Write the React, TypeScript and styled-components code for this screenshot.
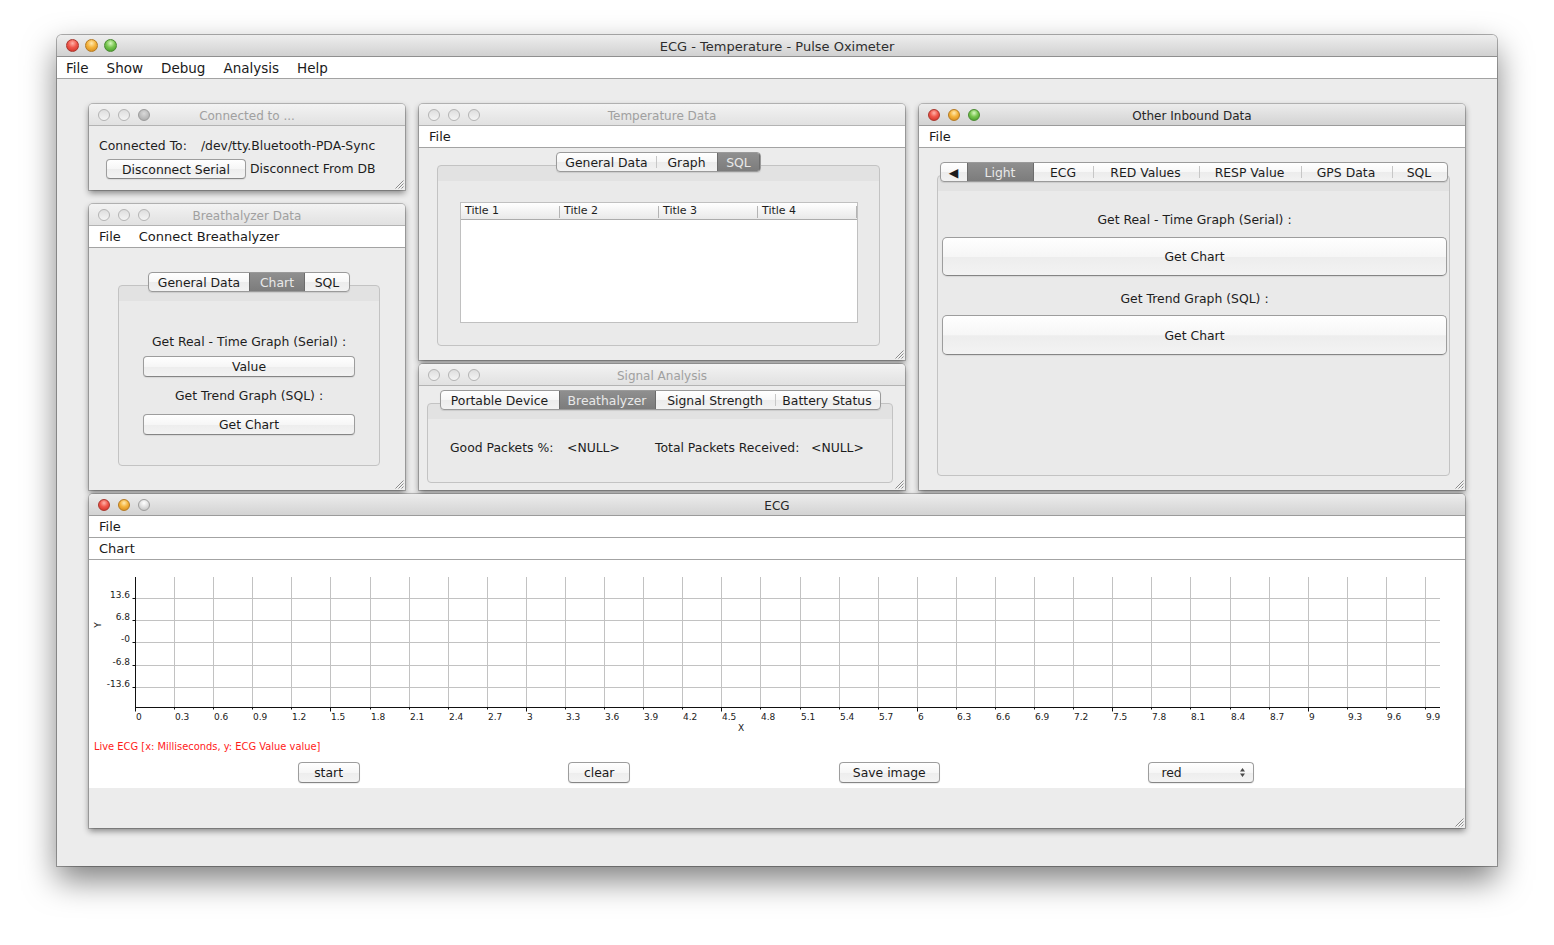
import React from "react";
import styled, { createGlobalStyle, css } from "styled-components";

const FONT = `"DejaVu Sans", "Lucida Grande", Verdana, sans-serif`;
const BODY_SIZE = 12.4;

const GlobalStyle = createGlobalStyle`
  html, body { margin: 0; padding: 0; background: #ffffff; }
  body { font-family: ${FONT}; color: #1d1d1d; }
  *, *::before, *::after { box-sizing: border-box; }
`;

const Page = styled.div`
  width: 1554px;
  height: 945px;
  padding: 35px 0 0 57px;
  overflow: hidden;
  background: #fff;
`;

const MainWindow = styled.div`
  width: 1440px;
  height: 831px;
  display: flex;
  flex-direction: column;
  background: #ececec;
  border-radius: 5px 5px 0 0;
  box-shadow: 0 0 0 1px rgba(0, 0, 0, 0.3), 0 14px 32px rgba(0, 0, 0, 0.5);
`;

const MainTitleBar = styled.div`
  flex: none;
  height: 22px;
  display: grid;
  grid-template-columns: 1fr auto 1fr;
  align-items: center;
  background: linear-gradient(#eeeeee, #d1d1d1);
  border-bottom: 1px solid #8f8f8f;
  border-radius: 5px 5px 0 0;
  font-size: 13px;
  color: #2e2e2e;
`;

const MenuBar = styled.div<{ $size?: number; $pad?: number }>`
  flex: none;
  height: 22px;
  display: flex;
  align-items: center;
  background: #ffffff;
  border-bottom: 1px solid #a3a3a3;
  font-size: ${(p) => p.$size ?? 13}px;
  color: #1a1a1a;
  padding-left: ${(p) => p.$pad ?? 0}px;
`;

const MenuItem = styled.span`
  padding: 1px 9px 0;
  line-height: 20px;
`;

const Desktop = styled.div`
  flex: 1;
  position: relative;
  background: #ececec;
`;

type LightKind = "red" | "orange" | "green" | "gray" | "hollow" | "hollowDark";

const lightBg: Record<LightKind, string> = {
  red: "radial-gradient(circle at 50% 30%, #ffb3a8 0%, #f0584c 45%, #c92b21 100%)",
  orange: "radial-gradient(circle at 50% 30%, #ffe9b0 0%, #f5b43c 45%, #cf831a 100%)",
  green: "radial-gradient(circle at 50% 30%, #d7f7bf 0%, #78c64f 45%, #3f9526 100%)",
  gray: "radial-gradient(circle at 50% 30%, #ffffff 0%, #e2e2e2 45%, #b9b9b9 100%)",
  hollow: "linear-gradient(#dedede, #f4f4f4)",
  hollowDark: "radial-gradient(circle at 50% 35%, #d9d9d9 0%, #b9b9b9 60%, #a5a5a5 100%)",
};

const lightBorder: Record<LightKind, string> = {
  red: "#a8362d",
  orange: "#b47a22",
  green: "#4a8a31",
  gray: "#9d9d9d",
  hollow: "#b4b4b4",
  hollowDark: "#9a9a9a",
};

const Lights = styled.div<{ $gap: number; $pad: number }>`
  display: flex;
  align-items: center;
  gap: ${(p) => p.$gap}px;
  padding-left: ${(p) => p.$pad}px;
`;

const Light = styled.span<{ $kind: LightKind; $size: number }>`
  display: block;
  width: ${(p) => p.$size}px;
  height: ${(p) => p.$size}px;
  border-radius: 50%;
  background: ${(p) => lightBg[p.$kind]};
  border: 1px solid ${(p) => lightBorder[p.$kind]};
`;

const TitleText = styled.span`
  white-space: nowrap;
  padding-top: 2px;
`;

/* ---------- internal frames ---------- */

const Frame = styled.div<{ $x: number; $y: number; $w: number; $h: number }>`
  position: absolute;
  left: ${(p) => p.$x}px;
  top: ${(p) => p.$y}px;
  width: ${(p) => p.$w}px;
  height: ${(p) => p.$h}px;
  display: flex;
  flex-direction: column;
  background: #ececec;
  border-radius: 4px 4px 0 0;
  box-shadow: 0 0 0 1px rgba(0, 0, 0, 0.2), 0 3px 6px rgba(0, 0, 0, 0.45);
`;

const FrameTitleBar = styled.div<{ $active?: boolean }>`
  flex: none;
  height: 22px;
  display: grid;
  grid-template-columns: 1fr auto 1fr;
  align-items: center;
  border-radius: 4px 4px 0 0;
  font-size: 12px;
  border-bottom: 1px solid ${(p) => (p.$active ? "#9b9b9b" : "#b3b3b3")};
  color: ${(p) => (p.$active ? "#262626" : "#a0a0a0")};
  background: ${(p) =>
    p.$active ? "linear-gradient(#ececec, #d3d3d3)" : "linear-gradient(#f3f3f3, #e1e1e1)"};
`;

const FrameBody = styled.div<{ $pad: string }>`
  flex: 1;
  min-height: 0;
  display: flex;
  flex-direction: column;
  padding: ${(p) => p.$pad};
  font-size: ${BODY_SIZE}px;
`;

const GripSvg = styled.svg`
  position: absolute;
  right: 1px;
  bottom: 1px;
`;

const Grip = () => (
  <GripSvg width={11} height={11} viewBox="0 0 11 11">
    <path d="M10.5 2.5 L2.5 10.5 M10.5 5.5 L5.5 10.5 M10.5 8.5 L8.5 10.5" stroke="#8a8a8a" strokeWidth={1} />
    <path d="M10.5 3.5 L3.5 10.5 M10.5 6.5 L6.5 10.5" stroke="#ffffff" strokeWidth={0.8} opacity={0.7} />
  </GripSvg>
);

type FrameProps = {
  x: number;
  y: number;
  w: number;
  h: number;
  title: string;
  active?: boolean;
  lights: [LightKind, LightKind, LightKind];
  children?: React.ReactNode;
};

const InternalFrame = ({ x, y, w, h, title, active, lights, children }: FrameProps) => (
  <Frame $x={x} $y={y} $w={w} $h={h}>
    <FrameTitleBar $active={active}>
      <Lights $gap={8} $pad={9}>
        {lights.map((k, i) => (
          <Light key={i} $kind={k} $size={12} />
        ))}
      </Lights>
      <TitleText>{title}</TitleText>
      <span />
    </FrameTitleBar>
    {children}
    <Grip />
  </Frame>
);

/* ---------- buttons ---------- */

const PushButton = styled.button<{ $w?: number; $h: number; $mt?: number; $r?: number }>`
  flex: none;
  width: ${(p) => (p.$w ? `${p.$w}px` : "auto")};
  height: ${(p) => p.$h}px;
  margin-top: ${(p) => p.$mt ?? 0}px;
  padding: 0;
  font-family: ${FONT};
  font-size: ${BODY_SIZE}px;
  color: #1a1a1a;
  border: 1px solid #9d9d9d;
  border-bottom-color: #858585;
  border-radius: ${(p) => p.$r ?? 4}px;
  background: linear-gradient(#ffffff, #f6f6f6 50%, #ededed 52%, #f3f3f3);
  box-shadow: 0 1px 1px rgba(0, 0, 0, 0.08);
  display: flex;
  align-items: center;
  justify-content: center;
`;

const CenterLabel = styled.div<{ $mt?: number }>`
  text-align: center;
  line-height: 16px;
  padding-top: 1px;
  margin-top: ${(p) => p.$mt ?? 0}px;
  white-space: nowrap;
`;

/* ---------- tabs ---------- */

const TabPane = styled.div`
  flex: 1;
  min-height: 0;
  display: flex;
  flex-direction: column;
  align-items: center;
`;

const TabStrip = styled.div`
  flex: none;
  display: flex;
  height: 20px;
  position: relative;
  z-index: 1;
  overflow: hidden;
  border: 1px solid #9a9a9a;
  border-radius: 4px;
  background: linear-gradient(#ffffff, #f7f7f7 50%, #ececec 52%, #f2f2f2);
  box-shadow: 0 1px 1px rgba(0, 0, 0, 0.1);
`;

const Tab = styled.div<{ $w: number; $selected?: boolean; $sep?: boolean }>`
  flex: none;
  width: ${(p) => p.$w}px;
  position: relative;
  display: flex;
  align-items: center;
  justify-content: center;
  padding-top: 1px;
  font-size: ${BODY_SIZE}px;
  white-space: nowrap;
  color: ${(p) => (p.$selected ? "#e9e9e9" : "#1c1c1c")};
  background: ${(p) => (p.$selected ? "linear-gradient(#8f8f8f, #7c7c7c)" : "transparent")};
  ${(p) =>
    p.$selected &&
    css`
      box-shadow: inset 1px 0 0 #6c6c6c, inset -1px 0 0 #6c6c6c;
    `}
  ${(p) =>
    p.$sep &&
    css`
      &::before {
        content: "";
        position: absolute;
        left: 0;
        top: 3px;
        bottom: 3px;
        width: 1px;
        background: #c7c7c7;
      }
    `}
`;

const TabBox = styled.div<{ $pad: string }>`
  align-self: stretch;
  flex: 1;
  min-height: 0;
  margin-top: -7px;
  border: 1px solid #c3c3c3;
  border-radius: 4px;
  background: linear-gradient(#e2e2e2 0, #e2e2e2 15px, #eaeaea 15px);
  padding: ${(p) => p.$pad};
  display: flex;
  flex-direction: column;
`;

type TabDef = { label: React.ReactNode; w: number; sel?: boolean; sep?: boolean };

const Tabs = ({ tabs }: { tabs: TabDef[] }) => (
  <TabStrip>
    {tabs.map((t, i) => (
      <Tab key={i} $w={t.w} $selected={t.sel} $sep={t.sep}>
        {t.label}
      </Tab>
    ))}
  </TabStrip>
);

/* ---------- connected frame ---------- */

const ConnBody = styled.div`
  flex: 1;
  display: flex;
  flex-direction: column;
  gap: 6px;
  padding: 11px 0 0 10px;
  font-size: ${BODY_SIZE}px;
`;

const ConnRow = styled.div`
  display: flex;
  align-items: center;
  height: 16px;
  padding-top: 1px;
  white-space: nowrap;
`;

const PathText = styled.span`
  margin-left: 14px;
`;

const ConnButtons = styled.div`
  display: flex;
  align-items: center;
  padding-left: 7px;
`;

const LinkLabel = styled.span`
  margin: -2px 0 0 4px;
  white-space: nowrap;
`;

/* ---------- table ---------- */

const Table = styled.div`
  flex: 1;
  background: #ffffff;
  border: 1px solid #c0c0c0;
  display: flex;
  flex-direction: column;
`;

const TableHeader = styled.div`
  flex: none;
  height: 17px;
  display: grid;
  grid-template-columns: repeat(4, 1fr);
  background: linear-gradient(#ffffff, #f4f4f4 50%, #e9e9e9);
  border-bottom: 1px solid #acacac;
`;

const HeaderCell = styled.div`
  position: relative;
  font-size: 11px;
  line-height: 16px;
  padding-left: 4px;
  &::after {
    content: "";
    position: absolute;
    right: 0;
    top: 3px;
    bottom: 1px;
    width: 1px;
    background: #b4b4b4;
  }
`;

/* ---------- signal ---------- */

const StatsRow = styled.div`
  display: grid;
  grid-template-columns: 117px 88px 156px auto;
  line-height: 16px;
  padding-top: 1px;
  white-space: nowrap;
`;

/* ---------- ECG ---------- */

const ChartPanel = styled.div`
  flex: none;
  height: 228px;
  background: #ffffff;
  display: flex;
  flex-direction: column;
`;

const ChartSvg = styled.svg`
  display: block;
  flex: none;
`;

const Legend = styled.div`
  height: 14px;
  line-height: 14px;
  padding-left: 5px;
  font-family: "Liberation Sans Narrow", "DejaVu Sans Condensed", "Liberation Sans", sans-serif;
  font-size: 11px;
  color: #ff1a1a;
`;

const ControlRow = styled.div`
  display: flex;
  justify-content: space-evenly;
  align-items: center;
  margin-top: 8px;
  height: 21px;
  padding-right: 2px;
`;

const SelectBox = styled.div`
  width: 106px;
  height: 21px;
  display: flex;
  align-items: center;
  justify-content: space-between;
  padding: 0 7px 0 12px;
  font-size: ${BODY_SIZE}px;
  border: 1px solid #9d9d9d;
  border-bottom-color: #858585;
  border-radius: 4px;
  background: linear-gradient(#ffffff, #f6f6f6 50%, #ededed 52%, #f3f3f3);
  box-shadow: 0 1px 1px rgba(0, 0, 0, 0.08);
`;

const BottomFill = styled.div`
  flex: 1;
  background: #ececec;
`;

const Chart = () => {
  const W = 1376;
  const H = 180;
  const ax = 46.5;
  const top = 17;
  const bottom = 147.5;
  const right = 1351;
  const step = 39.09;
  const idx = Array.from({ length: 34 }, (_, i) => i);
  const gx = (i: number) => Math.round(ax + i * step - 0.5) + 0.5;
  const yVals = [13.6, 6.8, 0, -6.8, -13.6];
  const gy = (v: number) => Math.round(82.8 - v * 3.27 - 0.5) + 0.5;
  const fmt = (i: number) => {
    const s = (i * 0.3).toFixed(1);
    return s.endsWith(".0") ? s.slice(0, -2) : s;
  };
  const yLabel = (v: number) => (v === 0 ? "-0" : String(v));
  return (
    <ChartSvg width={W} height={H} viewBox={`0 0 ${W} ${H}`}>
      <g stroke="#c2c2c2" strokeWidth={1}>
        {idx.slice(1).map((i) => (
          <line key={`vx${i}`} x1={gx(i)} x2={gx(i)} y1={top} y2={bottom} />
        ))}
        {yVals.map((v) => (
          <line key={`hy${v}`} x1={ax} x2={right} y1={gy(v)} y2={gy(v)} />
        ))}
      </g>
      <g stroke="#111" strokeWidth={1}>
        <line x1={ax} x2={ax} y1={top} y2={bottom + 4} />
        <line x1={ax} x2={right} y1={bottom} y2={bottom} />
        {yVals.map((v) => (
          <line key={`ty${v}`} x1={ax - 3} x2={ax} y1={gy(v)} y2={gy(v)} />
        ))}
        {idx.slice(1).map((i) => (
          <line key={`tx${i}`} x1={gx(i)} x2={gx(i)} y1={bottom} y2={bottom + (i % 5 === 0 ? 4 : 2)} />
        ))}
      </g>
      <g fontFamily={FONT} fontSize={9} fill="#1a1a1a">
        {yVals.map((v) => (
          <text key={`ly${v}`} x={41} y={gy(v) - 0.5} textAnchor="end">
            {yLabel(v)}
          </text>
        ))}
        {idx.map((i) => (
          <text key={`lx${i}`} x={gx(i) + 0.5} y={160}>
            {fmt(i)}
          </text>
        ))}
        <text x={649} y={171}>X</text>
        <text x={12} y={65} transform="rotate(-90 12 65)" textAnchor="middle">
          Y
        </text>
      </g>
    </ChartSvg>
  );
};

const SelectArrows = () => (
  <svg width={7} height={11} viewBox="0 0 7 11">
    <path d="M3.5 1 L6 4.5 H1 Z M3.5 10 L6 6.5 H1 Z" fill="#4a4a4a" />
  </svg>
);

/* ---------- App ---------- */

export default function App() {
  return (
    <>
      <GlobalStyle />
      <Page>
        <MainWindow>
          <MainTitleBar>
            <Lights $gap={6} $pad={9}>
              <Light $kind="red" $size={13} />
              <Light $kind="orange" $size={13} />
              <Light $kind="green" $size={13} />
            </Lights>
            <TitleText>ECG - Temperature - Pulse Oximeter</TitleText>
            <span />
          </MainTitleBar>
          <MenuBar $size={13.5}>
            <MenuItem>File</MenuItem>
            <MenuItem>Show</MenuItem>
            <MenuItem>Debug</MenuItem>
            <MenuItem>Analysis</MenuItem>
            <MenuItem>Help</MenuItem>
          </MenuBar>
          <Desktop>
            <InternalFrame x={32} y={25} w={316} h={86} title="Connected to ..." lights={["hollow", "hollow", "hollowDark"]}>
              <ConnBody>
                <ConnRow>
                  <span>Connected To:</span>
                  <PathText>/dev/tty.Bluetooth-PDA-Sync</PathText>
                </ConnRow>
                <ConnButtons>
                  <PushButton $w={140} $h={20}>Disconnect Serial</PushButton>
                  <LinkLabel>Disconnect From DB</LinkLabel>
                </ConnButtons>
              </ConnBody>
            </InternalFrame>

            <InternalFrame x={32} y={125} w={316} h={286} title="Breathalyzer Data" lights={["hollow", "hollow", "hollow"]}>
              <MenuBar $pad={1}>
                <MenuItem>File</MenuItem>
                <MenuItem>Connect Breathalyzer</MenuItem>
              </MenuBar>
              <FrameBody $pad="24px 25px 24px 29px">
                <TabPane>
                  <Tabs
                    tabs={[
                      { label: "General Data", w: 100 },
                      { label: "Chart", w: 56, sel: true },
                      { label: "SQL", w: 44 },
                    ]}
                  />
                  <TabBox $pad="47px 24px 0 24px">
                    <CenterLabel>Get Real - Time Graph (Serial) :</CenterLabel>
                    <PushButton $h={21} $mt={6}>Value</PushButton>
                    <CenterLabel $mt={10}>Get Trend Graph (SQL) :</CenterLabel>
                    <PushButton $h={21} $mt={10}>Get Chart</PushButton>
                  </TabBox>
                </TabPane>
              </FrameBody>
            </InternalFrame>

            <InternalFrame x={362} y={25} w={486} h={256} title="Temperature Data" lights={["hollow", "hollow", "hollow"]}>
              <MenuBar $pad={1}>
                <MenuItem>File</MenuItem>
              </MenuBar>
              <FrameBody $pad="4px 25px 14px 18px">
                <TabPane>
                  <Tabs
                    tabs={[
                      { label: "General Data", w: 99 },
                      { label: "Graph", w: 61, sep: true },
                      { label: "SQL", w: 43, sel: true },
                    ]}
                  />
                  <TabBox $pad="36px 21px 22px 22px">
                    <Table>
                      <TableHeader>
                        <HeaderCell>Title 1</HeaderCell>
                        <HeaderCell>Title 2</HeaderCell>
                        <HeaderCell>Title 3</HeaderCell>
                        <HeaderCell>Title 4</HeaderCell>
                      </TableHeader>
                    </Table>
                  </TabBox>
                </TabPane>
              </FrameBody>
            </InternalFrame>

            <InternalFrame x={362} y={285} w={486} h={126} title="Signal Analysis" lights={["hollow", "hollow", "hollow"]}>
              <FrameBody $pad="4px 12px 7px 8px">
                <TabPane>
                  <Tabs
                    tabs={[
                      { label: "Portable Device", w: 118 },
                      { label: "Breathalyzer", w: 97, sel: true },
                      { label: "Signal Strength", w: 119 },
                      { label: "Battery Status", w: 105, sep: true },
                    ]}
                  />
                  <TabBox $pad="35px 0 0 22px">
                    <StatsRow>
                      <span>Good Packets %:</span>
                      <span>&lt;NULL&gt;</span>
                      <span>Total Packets Received:</span>
                      <span>&lt;NULL&gt;</span>
                    </StatsRow>
                  </TabBox>
                </TabPane>
              </FrameBody>
            </InternalFrame>

            <InternalFrame x={862} y={25} w={546} h={386} title="Other Inbound Data" active lights={["red", "orange", "green"]}>
              <MenuBar $pad={1}>
                <MenuItem>File</MenuItem>
              </MenuBar>
              <FrameBody $pad="14px 15px 14px 18px">
                <TabPane>
                  <Tabs
                    tabs={[
                      { label: "◀", w: 26 },
                      { label: "Light", w: 67, sel: true },
                      { label: "ECG", w: 59 },
                      { label: "RED Values", w: 106, sep: true },
                      { label: "RESP Value", w: 102, sep: true },
                      { label: "GPS Data", w: 91, sep: true },
                      { label: "SQL", w: 55, sep: true },
                    ]}
                  />
                  <TabBox $pad="35px 2px 0 4px">
                    <CenterLabel>Get Real - Time Graph (Serial) :</CenterLabel>
                    <PushButton $h={39} $mt={9} $r={5}>Get Chart</PushButton>
                    <CenterLabel $mt={14}>Get Trend Graph (SQL) :</CenterLabel>
                    <PushButton $h={40} $mt={8} $r={5}>Get Chart</PushButton>
                  </TabBox>
                </TabPane>
              </FrameBody>
            </InternalFrame>

            <InternalFrame x={32} y={415} w={1376} h={334} title="ECG" active lights={["red", "orange", "gray"]}>
              <MenuBar $pad={1}>
                <MenuItem>File</MenuItem>
              </MenuBar>
              <MenuBar $pad={1}>
                <MenuItem>Chart</MenuItem>
              </MenuBar>
              <ChartPanel>
                <Chart />
                <Legend>Live ECG [x: Milliseconds, y: ECG Value value]</Legend>
                <ControlRow>
                  <PushButton $w={62} $h={21}>start</PushButton>
                  <PushButton $w={62} $h={21}>clear</PushButton>
                  <PushButton $w={101} $h={21}>Save image</PushButton>
                  <SelectBox>
                    <span>red</span>
                    <SelectArrows />
                  </SelectBox>
                </ControlRow>
              </ChartPanel>
              <BottomFill />
            </InternalFrame>
          </Desktop>
        </MainWindow>
      </Page>
    </>
  );
}
